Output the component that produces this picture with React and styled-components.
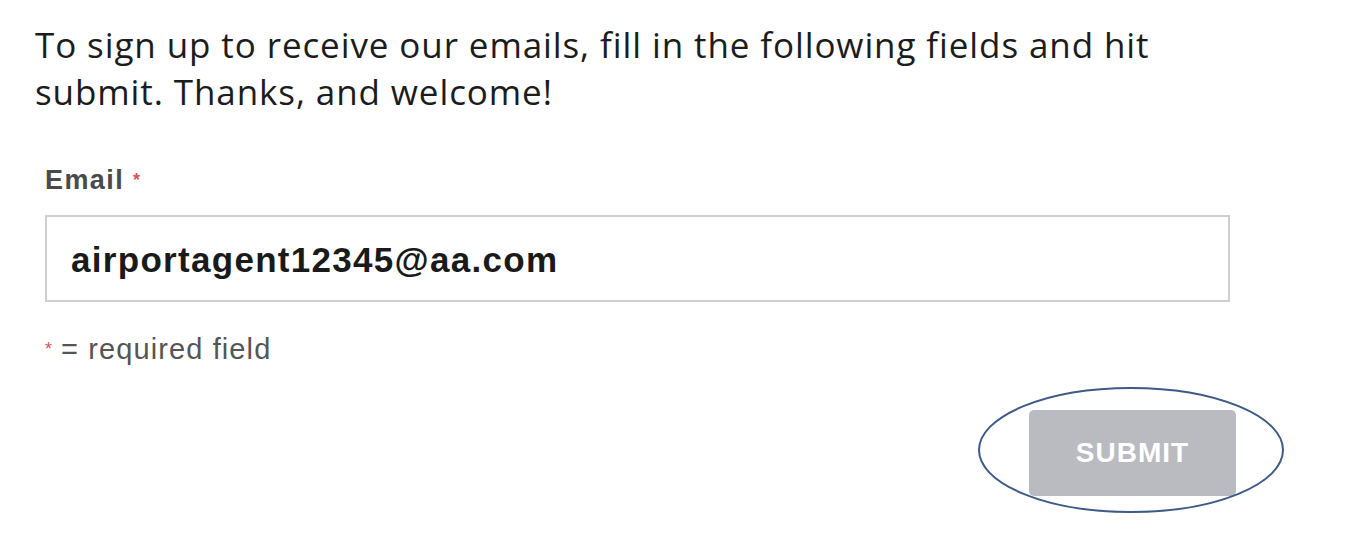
import React from "react";
import styled, { createGlobalStyle } from "styled-components";

const Global = createGlobalStyle`
  html, body { margin: 0; padding: 0; background: #fff; }
  body { width: 1352px; height: 534px; overflow: hidden; }
`;

const Page = styled.div`
  padding: 21px 0 0 35px;
  width: 1352px;
  box-sizing: border-box;
`;

const Intro = styled.p`
  margin: 0;
  width: 1200px;
  font-family: "Open Sans", Lato, sans-serif;
  font-size: 35px;
  line-height: 47px;
  letter-spacing: 0.9px;
  color: #1c1c1c;
`;

const Form = styled.form`
  display: flex;
  flex-direction: column;
  margin: 50px 0 0 10px;
  width: 1185px;
`;

const Label = styled.label`
  font-family: "Liberation Sans", Arial, sans-serif;
  font-weight: bold;
  font-size: 27px;
  line-height: 30px;
  letter-spacing: 1.4px;
  color: #4a4a4a;
`;

const Star = styled.span`
  color: #e0535a;
  font-size: 18px;
  vertical-align: top;
  margin: ${(p) => (p.$lead ? "0 8px 0 0" : "0 0 0 9px")};
`;

const Input = styled.div`
  margin-top: 20px;
  height: 87px;
  box-sizing: border-box;
  border: 2px solid #cfcfd1;
  display: flex;
  align-items: center;
  padding: 2px 0 0 24px;
  font-family: "Liberation Sans", Arial, sans-serif;
  font-weight: bold;
  font-size: 35px;
  letter-spacing: 1.3px;
  color: #1a1a1a;
`;

const Note = styled.div`
  margin-top: 32px;
  font-family: "Liberation Sans", Arial, sans-serif;
  font-size: 29px;
  line-height: 30px;
  letter-spacing: 1.1px;
  color: #555;
`;

const Actions = styled.div`
  display: flex;
  justify-content: flex-end;
  width: 1191px;
  margin-top: 46px;
`;

const ButtonWrap = styled.div`
  position: relative;
`;

const Submit = styled.button`
  width: 207px;
  height: 86px;
  border: none;
  border-radius: 5px;
  background: #b9bbc0;
  color: #fff;
  font-family: "Liberation Sans", Arial, sans-serif;
  font-weight: bold;
  font-size: 28px;
  letter-spacing: 1px;
  padding: 0;
`;

const Ring = styled.svg`
  position: absolute;
  left: -51px;
  top: -23px;
  overflow: visible;
  pointer-events: none;
`;

export default function App() {
  return (
    <>
      <Global />
      <Page>
        <Intro>
          To sign up to receive our emails, fill in the following fields and hit
          submit. Thanks, and welcome!
        </Intro>
        <Form onSubmit={(e) => e.preventDefault()}>
          <Label>
            Email<Star>*</Star>
          </Label>
          <Input>airportagent12345@aa.com</Input>
          <Note>
            <Star $lead>*</Star>= required field
          </Note>
          <Actions>
            <ButtonWrap>
              <Submit type="button">SUBMIT</Submit>
              <Ring width="306" height="126" viewBox="0 0 306 126">
                <ellipse cx="153" cy="63" rx="152" ry="62" fill="none" stroke="#3d5a88" strokeWidth="2" />
              </Ring>
            </ButtonWrap>
          </Actions>
        </Form>
      </Page>
    </>
  );
}
